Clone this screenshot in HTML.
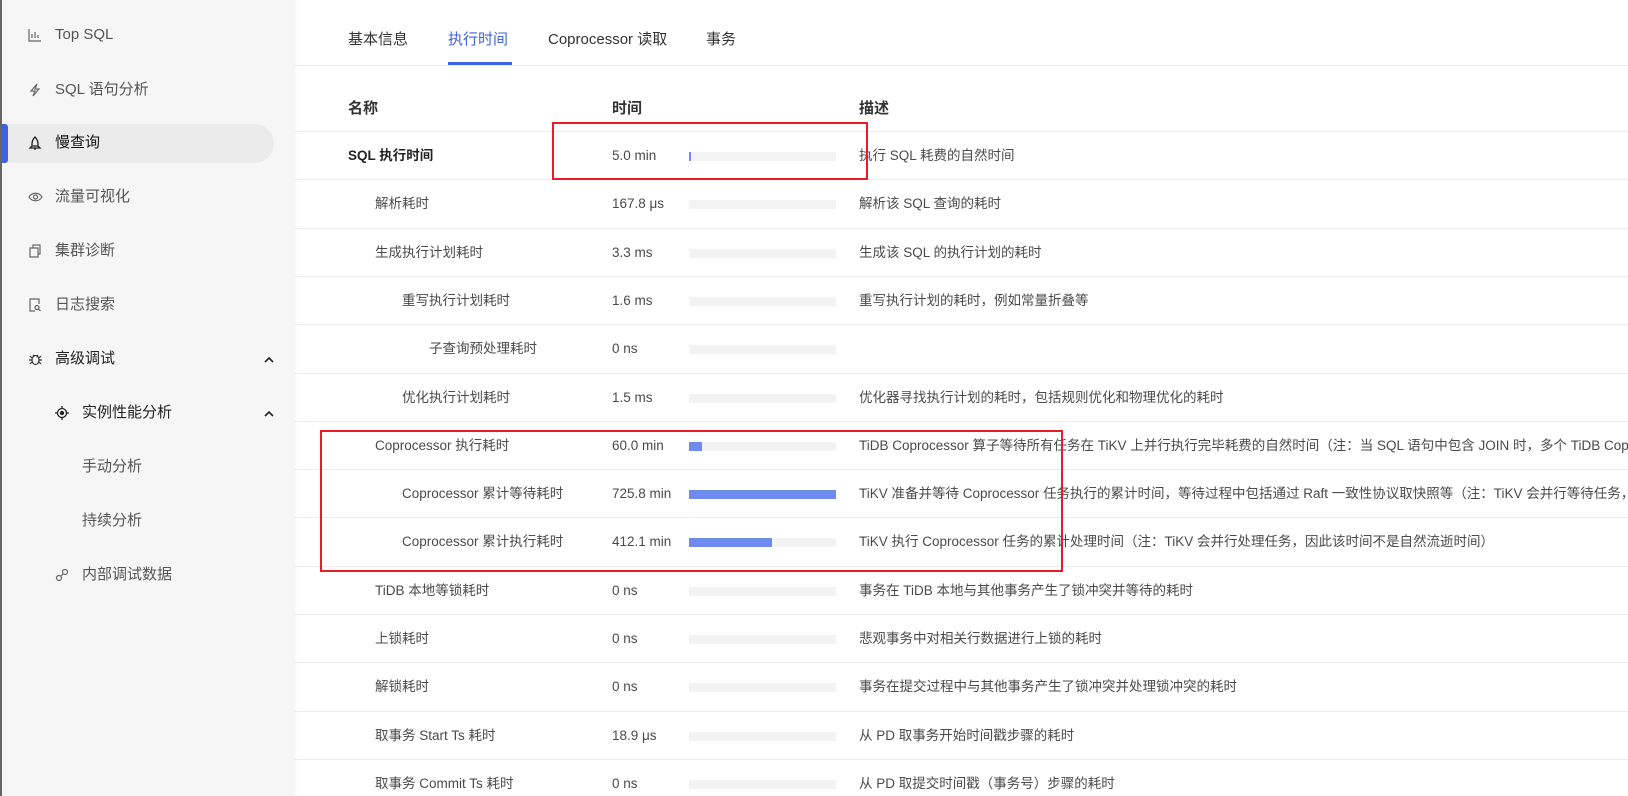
<!DOCTYPE html>
<html><head><meta charset="utf-8"><style>
*{margin:0;padding:0;box-sizing:border-box}
html,body{width:1628px;height:796px;overflow:hidden}
body{background:#fff;font-family:"Liberation Sans","Noto Sans CJK SC",sans-serif;color:#333;position:relative}
.side{position:absolute;left:0;top:0;width:294px;height:796px;background:#f6f6f6;border-left:2px solid #666;box-shadow:1px 0 3px rgba(0,0,0,.06)}
.mi{position:absolute;left:0;height:20px;line-height:20px;font-size:15px;color:#555;white-space:nowrap}
.mi svg{position:absolute;top:3px}
.pill{position:absolute;left:0;top:124px;width:272px;height:39px;background:#ebebeb;border-radius:0 20px 20px 0}
.bluebar{position:absolute;left:0;top:124px;width:6px;height:39px;background:#3f63e0;border-radius:0 3px 3px 0}
.tab{position:absolute;top:28px;font-size:15px;color:#333;white-space:nowrap}
.row{position:absolute;left:294px;width:1334px;height:49px;border-top:1px solid #ececec;font-size:13.5px;color:#4a4a4a;white-space:nowrap;overflow:hidden}
.row span{position:absolute;top:0;line-height:48px}
.bar{position:absolute;top:20px;width:147px;height:9px;background:#f3f3f3}
.bar i{display:block;height:9px;background:#6f8bee}
.red{position:absolute;border:2px solid #e81c24}
</style></head><body>
<div class="side">
<div class="pill"></div><div class="bluebar"></div>
<div class="mi" style="top:25px;left:26px"><svg width="14" height="14" viewBox="0 0 14 14" fill="none" stroke="#666" stroke-width="1.2"><path d="M1 1v12h12M4 10V6M7 10V4M10 10V7"/></svg><span style="margin-left:27px">Top SQL</span></div>
<div class="mi" style="top:80px;left:26px"><svg width="14" height="14" viewBox="0 0 14 14" fill="none" stroke="#666" stroke-width="1.2"><path d="M9 1L3 8h4l-2 5 6-7H7z"/></svg><span style="margin-left:27px">SQL 语句分析</span></div>
<div class="mi" style="top:133px;left:26px;color:#111"><svg width="14" height="14" viewBox="0 0 14 14" fill="none" stroke="#222" stroke-width="1.3"><path d="M7 1c2 2 3 4 3 7v2H4V8c0-3 1-5 3-7zM4 10l-2 2h10l-2-2M6 13h2"/></svg><span style="margin-left:27px">慢查询</span></div>
<div class="mi" style="top:187px;left:26px"><svg width="15" height="14" viewBox="0 0 15 14" fill="none" stroke="#666" stroke-width="1.2"><path d="M1 7c3-5 10-5 13 0-3 5-10 5-13 0z"/><circle cx="7.5" cy="7" r="2"/></svg><span style="margin-left:27px">流量可视化</span></div>
<div class="mi" style="top:241px;left:26px"><svg width="14" height="14" viewBox="0 0 14 14" fill="none" stroke="#666" stroke-width="1.2"><path d="M2 4h8v9H2zM5 4V1h7v9h-2"/></svg><span style="margin-left:27px">集群诊断</span></div>
<div class="mi" style="top:295px;left:26px"><svg width="14" height="14" viewBox="0 0 14 14" fill="none" stroke="#666" stroke-width="1.2"><path d="M7 13H2V1h9v5"/><circle cx="9" cy="9.5" r="2"/><path d="M10.5 11l2 2"/></svg><span style="margin-left:27px">日志搜索</span></div>
<div class="mi" style="top:349px;left:26px;color:#222"><svg width="15" height="14" viewBox="0 0 15 14" fill="none" stroke="#333" stroke-width="1.2"><ellipse cx="7.5" cy="8" rx="3.5" ry="4.5"/><path d="M5 3l1.5 1.5M10 3L8.5 4.5M1 8h3M11 8h3M2 4l2 2M13 4l-2 2M2 12l2-2M13 12l-2-2"/></svg><span style="margin-left:27px">高级调试</span></div>
<svg style="position:absolute;left:262px;top:356px" width="10" height="7" viewBox="0 0 10 7" fill="none" stroke="#222" stroke-width="1.6"><path d="M1 6l4-4 4 4"/></svg>
<div class="mi" style="top:403px;left:53px;color:#222"><svg width="14" height="14" viewBox="0 0 14 14" fill="none" stroke="#222" stroke-width="1.3"><circle cx="7" cy="7" r="4.5"/><circle cx="7" cy="7" r="1.5" fill="#222"/><path d="M7 0v2M7 12v2M0 7h2M12 7h2"/></svg><span style="margin-left:27px">实例性能分析</span></div>
<svg style="position:absolute;left:262px;top:410px" width="10" height="7" viewBox="0 0 10 7" fill="none" stroke="#222" stroke-width="1.6"><path d="M1 6l4-4 4 4"/></svg>
<div class="mi" style="top:457px;left:80px">手动分析</div>
<div class="mi" style="top:511px;left:80px">持续分析</div>
<div class="mi" style="top:565px;left:53px"><svg width="14" height="14" viewBox="0 0 14 14" fill="none" stroke="#666" stroke-width="1.2"><circle cx="4" cy="10" r="2.5"/><circle cx="10" cy="4" r="2.5"/><path d="M6 8l2-2"/></svg><span style="margin-left:27px">内部调试数据</span></div>
</div>

<div class="tab" style="left:348px">基本信息</div>
<div class="tab" style="left:448px;color:#3f63e0">执行时间</div>
<div class="tab" style="left:548px">Coprocessor 读取</div>
<div class="tab" style="left:706px">事务</div>
<div style="position:absolute;left:294px;width:1334px;top:65px;height:1px;background:#ececec"></div>
<div style="position:absolute;left:448px;width:64px;top:62px;height:3px;background:#3f63e0"></div>

<div style="position:absolute;top:97px;left:348px;font-size:15px;font-weight:bold;color:#333">名称</div>
<div style="position:absolute;top:97px;left:612px;font-size:15px;font-weight:bold;color:#333">时间</div>
<div style="position:absolute;top:97px;left:859px;font-size:15px;font-weight:bold;color:#333">描述</div>

<div class="row" style="top:131px"><span style="left:54px;font-weight:bold;color:#222">SQL 执行时间</span><span style="left:318px">5.0 min</span><div class="bar" style="left:395px"><i style="width:2px"></i></div><span style="left:565px">执行 SQL 耗费的自然时间</span></div>
<div class="row" style="top:179.3px"><span style="left:81px">解析耗时</span><span style="left:318px">167.8 μs</span><div class="bar" style="left:395px"><i style="width:0"></i></div><span style="left:565px">解析该 SQL 查询的耗时</span></div>
<div class="row" style="top:227.6px"><span style="left:81px">生成执行计划耗时</span><span style="left:318px">3.3 ms</span><div class="bar" style="left:395px"><i style="width:0"></i></div><span style="left:565px">生成该 SQL 的执行计划的耗时</span></div>
<div class="row" style="top:275.9px"><span style="left:108px">重写执行计划耗时</span><span style="left:318px">1.6 ms</span><div class="bar" style="left:395px"><i style="width:0"></i></div><span style="left:565px">重写执行计划的耗时，例如常量折叠等</span></div>
<div class="row" style="top:324.2px"><span style="left:135px">子查询预处理耗时</span><span style="left:318px">0 ns</span><div class="bar" style="left:395px"><i style="width:0"></i></div></div>
<div class="row" style="top:372.5px"><span style="left:108px">优化执行计划耗时</span><span style="left:318px">1.5 ms</span><div class="bar" style="left:395px"><i style="width:0"></i></div><span style="left:565px">优化器寻找执行计划的耗时，包括规则优化和物理优化的耗时</span></div>
<div class="row" style="top:420.8px"><span style="left:81px">Coprocessor 执行耗时</span><span style="left:318px">60.0 min</span><div class="bar" style="left:395px"><i style="width:13px"></i></div><span style="left:565px">TiDB Coprocessor 算子等待所有任务在 TiKV 上并行执行完毕耗费的自然时间（注：当 SQL 语句中包含 JOIN 时，多个 TiDB Coprocessor 算子可能会并行执行）</span></div>
<div class="row" style="top:469.1px"><span style="left:108px">Coprocessor 累计等待耗时</span><span style="left:318px">725.8 min</span><div class="bar" style="left:395px"><i style="width:147px"></i></div><span style="left:565px">TiKV 准备并等待 Coprocessor 任务执行的累计时间，等待过程中包括通过 Raft 一致性协议取快照等（注：TiKV 会并行等待任务，因此该时间不是自然流逝时间）</span></div>
<div class="row" style="top:517.4px"><span style="left:108px">Coprocessor 累计执行耗时</span><span style="left:318px">412.1 min</span><div class="bar" style="left:395px"><i style="width:83px"></i></div><span style="left:565px">TiKV 执行 Coprocessor 任务的累计处理时间（注：TiKV 会并行处理任务，因此该时间不是自然流逝时间）</span></div>
<div class="row" style="top:565.7px"><span style="left:81px">TiDB 本地等锁耗时</span><span style="left:318px">0 ns</span><div class="bar" style="left:395px"><i style="width:0"></i></div><span style="left:565px">事务在 TiDB 本地与其他事务产生了锁冲突并等待的耗时</span></div>
<div class="row" style="top:614px"><span style="left:81px">上锁耗时</span><span style="left:318px">0 ns</span><div class="bar" style="left:395px"><i style="width:0"></i></div><span style="left:565px">悲观事务中对相关行数据进行上锁的耗时</span></div>
<div class="row" style="top:662.3px"><span style="left:81px">解锁耗时</span><span style="left:318px">0 ns</span><div class="bar" style="left:395px"><i style="width:0"></i></div><span style="left:565px">事务在提交过程中与其他事务产生了锁冲突并处理锁冲突的耗时</span></div>
<div class="row" style="top:710.6px"><span style="left:81px">取事务 Start Ts 耗时</span><span style="left:318px">18.9 μs</span><div class="bar" style="left:395px"><i style="width:0"></i></div><span style="left:565px">从 PD 取事务开始时间戳步骤的耗时</span></div>
<div class="row" style="top:758.9px"><span style="left:81px">取事务 Commit Ts 耗时</span><span style="left:318px">0 ns</span><div class="bar" style="left:395px"><i style="width:0"></i></div><span style="left:565px">从 PD 取提交时间戳（事务号）步骤的耗时</span></div>

<div class="red" style="left:552px;top:122px;width:316px;height:58px"></div>
<div class="red" style="left:320px;top:430px;width:743px;height:142px"></div>
</body></html>
